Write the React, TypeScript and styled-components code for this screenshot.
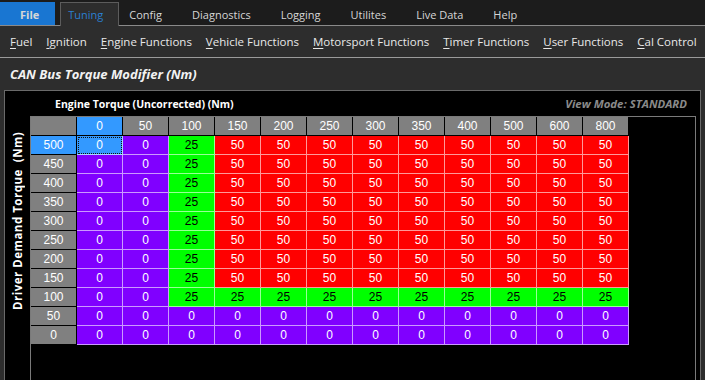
import React from 'react'
import styled, { createGlobalStyle } from 'styled-components'

const GlobalStyle = createGlobalStyle`
  html, body {
    margin: 0;
    padding: 0;
    background: #2d2d2d;
    overflow: hidden;
  }
  body {
    font-family: 'Open Sans', 'Noto Sans', sans-serif;
  }
`

const tabs = ['File', 'Tuning', 'Config', 'Diagnostics', 'Logging', 'Utilites', 'Live Data', 'Help']
const menus = [
  'Fuel',
  'Ignition',
  'Engine Functions',
  'Vehicle Functions',
  'Motorsport Functions',
  'Timer Functions',
  'User Functions',
  'Cal Control',
]
const columns = [0, 50, 100, 150, 200, 250, 300, 350, 400, 500, 600, 800]
const rows = [500, 450, 400, 350, 300, 250, 200, 150, 100, 50, 0]

const valueAt = (row: number, col: number) => {
  if (row <= 50 || col <= 50) return 0
  if (row === 100 || col === 100) return 25
  return 50
}

type TabKind = 'file' | 'active' | 'normal'

const App = () => {
  return (
    <Screen>
      <GlobalStyle />
      <TabBar>
        {tabs.map((t) => {
          const kind: TabKind = t === 'File' ? 'file' : t === 'Tuning' ? 'active' : 'normal'
          return (
            <Tab key={t} $kind={kind}>
              {t}
            </Tab>
          )
        })}
      </TabBar>
      <MenuBar>
        {menus.map((m) => (
          <MenuItem key={m}>
            <u>{m[0]}</u>
            {m.slice(1)}
          </MenuItem>
        ))}
      </MenuBar>
      <TitleBar>CAN Bus Torque Modifier (Nm)</TitleBar>
      <Panel>
        <PanelHeader>
          <AxisTitle>Engine Torque (Uncorrected) (Nm)</AxisTitle>
          <ViewMode>View Mode: STANDARD</ViewMode>
        </PanelHeader>
        <PanelBody>
          <SideLabel>Driver Demand Torque  (Nm)</SideLabel>
          <GridFrame>
            <Grid>
              <HeadCell />
              {columns.map((c, i) => (
                <HeadCell key={c} $selected={i === 0}>
                  {c}
                </HeadCell>
              ))}
              {rows.map((r, ri) => (
                <React.Fragment key={r}>
                  <HeadCell $selected={ri === 0}>{r}</HeadCell>
                  {columns.map((c, ci) => {
                    const v = valueAt(r, c)
                    return (
                      <Cell key={c} $value={v} $focused={ri === 0 && ci === 0}>
                        {v}
                      </Cell>
                    )
                  })}
                </React.Fragment>
              ))}
            </Grid>
          </GridFrame>
        </PanelBody>
      </Panel>
    </Screen>
  )
}

const Screen = styled.div`
  width: 705px;
  height: 380px;
  display: flex;
  flex-direction: column;
  background: #2d2d2d;
  overflow: hidden;
`

const TabBar = styled.div`
  height: 25px;
  flex-shrink: 0;
  display: flex;
  align-items: flex-end;
  background: #1c1c1c;
  border-bottom: 1px solid #8a8a8a;
`

const tabPadding: Record<TabKind, string> = {
  file: '0 15px 0 19px',
  active: '0 15px 0 7px',
  normal: '0 14px',
}

const Tab = styled.div<{ $kind: TabKind }>`
  box-sizing: border-box;
  height: ${(p) => (p.$kind === 'active' ? 24 : 23)}px;
  display: flex;
  align-items: center;
  padding: ${(p) => tabPadding[p.$kind]};
  margin-right: ${(p) => (p.$kind === 'file' ? 5 : p.$kind === 'active' ? -5 : 0)}px;
  margin-bottom: ${(p) => (p.$kind === 'active' ? -1 : 0)}px;
  font-size: 11px;
  font-weight: ${(p) => (p.$kind === 'file' ? 700 : 400)};
  color: ${(p) => (p.$kind === 'active' ? '#2a7fd0' : '#d6d6d6')};
  background: ${(p) => (p.$kind === 'file' ? '#1976d2' : p.$kind === 'active' ? '#2d2d2d' : 'transparent')};
  border: 1px solid ${(p) => (p.$kind === 'active' ? '#5c5c5c' : 'transparent')};
  border-bottom: none;
  position: relative;
  z-index: ${(p) => (p.$kind === 'active' ? 1 : 0)};
`

const MenuBar = styled.div`
  height: 31px;
  flex-shrink: 0;
  display: flex;
  align-items: center;
  gap: 14px;
  padding-left: 10px;
  background: #2d2d2d;
  border-bottom: 1px solid #9a9a9a;
`

const MenuItem = styled.span`
  font-size: 11.5px;
  color: #e8e8e8;
  white-space: nowrap;
  u {
    text-underline-offset: 2px;
  }
`

const TitleBar = styled.div`
  height: 32px;
  flex-shrink: 0;
  display: flex;
  align-items: center;
  padding-left: 10px;
  font-size: 13px;
  font-weight: 700;
  font-style: italic;
  color: #f2f2f2;
  background: #2d2d2d;
`

const Panel = styled.div`
  flex: 1;
  display: flex;
  flex-direction: column;
  margin: 0 4px;
  background: #000;
  border: 1px solid #6a6a6a;
  border-bottom: none;
  min-height: 0;
`

const PanelHeader = styled.div`
  height: 25px;
  flex-shrink: 0;
  display: flex;
  align-items: center;
  justify-content: space-between;
  padding: 0 13px 0 50px;
`

const AxisTitle = styled.span`
  font-size: 10.5px;
  font-weight: 700;
  color: #fff;
`

const ViewMode = styled.span`
  font-size: 11.4px;
  font-weight: 700;
  font-style: italic;
  color: #8a8a8a;
`

const PanelBody = styled.div`
  flex: 1;
  display: flex;
  min-height: 0;
`

const SideLabel = styled.div`
  width: 25px;
  flex-shrink: 0;
  writing-mode: vertical-rl;
  transform: rotate(180deg);
  display: flex;
  align-items: center;
  justify-content: flex-end;
  padding-bottom: 16px;
  box-sizing: border-box;
  font-size: 11.5px;
  letter-spacing: 0.5px;
  font-weight: 700;
  color: #fff;
  white-space: pre;
`

const GridFrame = styled.div`
  flex: 1;
  margin-right: 4px;
  border: 1px solid #7a7a7a;
  border-bottom: none;
`

const Grid = styled.div`
  display: grid;
  grid-template-columns: 46px repeat(12, 46px);
  grid-auto-rows: 19px;
  font-family: 'Liberation Sans', Arial, sans-serif;
  font-size: 12px;
`

const HeadCell = styled.div<{ $selected?: boolean }>`
  box-sizing: border-box;
  display: flex;
  align-items: center;
  justify-content: center;
  color: #fff;
  background: ${(p) => (p.$selected ? '#3399ff' : '#808080')};
  border-right: 1px solid #000;
  border-bottom: 1px solid #000;
`

const cellColors: Record<number, string> = {
  0: '#8000ff',
  25: '#00ff00',
  50: '#ff0000',
}

const Cell = styled.div<{ $value: number; $focused?: boolean }>`
  box-sizing: border-box;
  display: flex;
  align-items: center;
  justify-content: center;
  color: ${(p) => (p.$value === 25 ? '#000' : '#fff')};
  background: ${(p) => (p.$focused ? '#3399ff' : cellColors[p.$value])};
  border-right: 1px solid rgba(255, 255, 255, 0.6);
  border-bottom: 1px solid rgba(255, 255, 255, 0.6);
  outline: ${(p) => (p.$focused ? '1px dotted #111' : 'none')};
  outline-offset: -2px;
`

export default App
